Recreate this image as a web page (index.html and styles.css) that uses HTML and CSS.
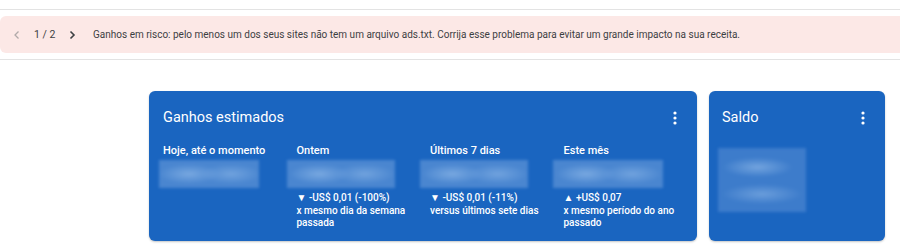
FILE: index.html
```html
<!DOCTYPE html>
<html lang="pt">
<head>
<meta charset="utf-8">
<link rel="stylesheet" href="styles.css">
</head>
<body>
<div class="top">
  <div class="rule"></div>
  <div class="banner">
    <div class="pager">
      <svg class="chev dis" width="10" height="10" viewBox="0 0 10 10"><path d="M6.5 1.5 L3 5 L6.5 8.5" fill="none" stroke="currentColor" stroke-width="1.3"/></svg>
      <span class="count">1 / 2</span>
      <svg class="chev" width="10" height="10" viewBox="0 0 10 10"><path d="M3.5 1.5 L7 5 L3.5 8.5" fill="none" stroke="currentColor" stroke-width="1.6"/></svg>
    </div>
    <span class="msg">Ganhos em risco: pelo menos um dos seus sites não tem um arquivo ads.txt. Corrija esse problema para evitar um grande impacto na sua receita.</span>
  </div>
  <div class="rule"></div>
</div>
<div class="cards">
  <div class="card earnings">
    <div class="card-head">
      <span class="title">Ganhos estimados</span>
      <svg class="kebab" width="4" height="14" viewBox="0 0 4 14"><circle cx="2" cy="2" r="1.6"/><circle cx="2" cy="7" r="1.6"/><circle cx="2" cy="12" r="1.6"/></svg>
    </div>
    <div class="cols">
      <div class="col">
        <div class="label">Hoje, até o momento</div>
        <div class="blur b1"></div>
      </div>
      <div class="col">
        <div class="label">Ontem</div>
        <div class="blur b2"></div>
        <div class="delta">▼ -US$ 0,01 (-100%)<br>x mesmo dia da semana<br>passada</div>
      </div>
      <div class="col">
        <div class="label">Últimos 7 dias</div>
        <div class="blur b3"></div>
        <div class="delta">▼ -US$ 0,01 (-11%)<br>versus últimos sete dias</div>
      </div>
      <div class="col">
        <div class="label">Este mês</div>
        <div class="blur b4"></div>
        <div class="delta">▲ +US$ 0,07<br>x mesmo período do ano<br>passado</div>
      </div>
    </div>
  </div>
  <div class="card balance">
    <div class="card-head">
      <span class="title">Saldo</span>
      <svg class="kebab" width="4" height="14" viewBox="0 0 4 14"><circle cx="2" cy="2" r="1.6"/><circle cx="2" cy="7" r="1.6"/><circle cx="2" cy="12" r="1.6"/></svg>
    </div>
    <div class="blur bal"></div>
  </div>
</div>
</body>
</html>
```
FILE: styles.css
```css
* { box-sizing: border-box; }
html, body { margin: 0; padding: 0; background: #fff; }
body { font-family: Roboto, "Liberation Sans", Arial, sans-serif; width: 900px; height: 249px; overflow: hidden; }

.top { padding-top: 9px; }
.rule { height: 1px; background: #e3e3e3; }
.banner {
  margin: 6px 0 6px 0;
  height: 37px;
  background: #fce8e6;
  border-radius: 6px 0 0 6px;
  display: flex;
  align-items: center;
  padding-left: 12px;
  color: #3c4043;
}
.pager { display: flex; align-items: center; width: 81px; }
.chev { color: #3c4043; }
.chev.dis { color: #b0a9a9; }
.count { font-size: 10.5px; margin: 0 12px 0 12px; }
.msg { font-size: 10px; }

.cards {
  display: flex;
  gap: 12px;
  padding: 31px 0 0 149px;
}
.card {
  background: #1a65c0;
  border-radius: 6px;
  height: 150px;
  color: #fff;
  box-shadow: 0 1px 2px rgba(60,64,67,0.3);
}
.earnings { width: 548px; padding: 0 0 0 14px; }
.balance { width: 176px; padding: 0 0 0 13px; }
.card-head {
  display: flex;
  justify-content: space-between;
  align-items: center;
  height: 53px;
  padding-right: 20px;
}
.title { font-size: 14.5px; font-weight: 400; }
.kebab { fill: #fff; }

.cols { display: flex; }
.col { width: 134px; }
.label { font-size: 11px; font-weight: 500; height: 14px; line-height: 14px; }
.blur {
  height: 28px;
  margin: 2px 0 4px -4px;
  width: 100px;
  background:
    radial-gradient(ellipse 30px 10px at 30% 50%, rgba(150,190,235,0.6), transparent),
    radial-gradient(ellipse 30px 10px at 72% 50%, rgba(150,190,235,0.5), transparent),
    #4a86d0;
  filter: blur(1.5px);
}
.b2 { margin-left: -10px; width: 108px; }
.b3 { margin-left: -10px; width: 108px; }
.b4 { margin-left: -11px; width: 110px; }
.delta { font-size: 10px; font-weight: 500; line-height: 12.5px; }
.bal {
  margin: 4px 0 0 -4px;
  width: 88px;
  height: 64px;
  background:
    radial-gradient(ellipse 35px 10px at 45% 30%, rgba(150,190,235,0.6), transparent),
    radial-gradient(ellipse 40px 10px at 50% 72%, rgba(150,190,235,0.5), transparent),
    #3d7ccb;
}
```
